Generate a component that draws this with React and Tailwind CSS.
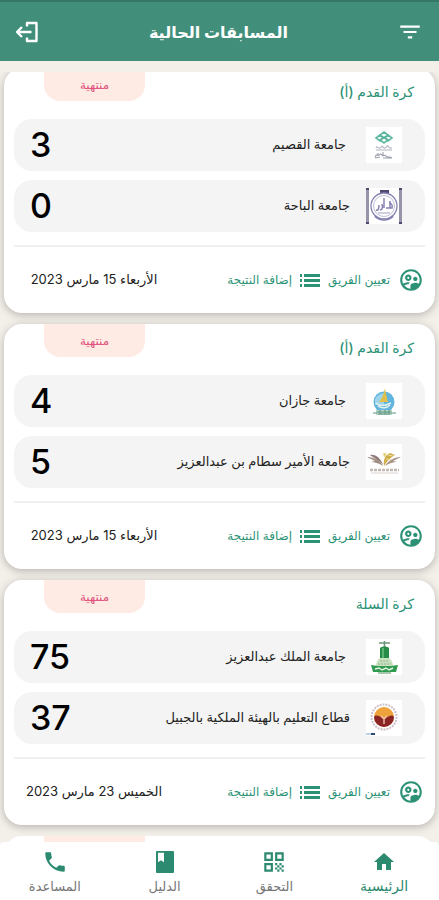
import React, { useState } from 'react'
import { MdFilterList, MdOutlineSupervisedUserCircle, MdHome, MdQrCode, MdPhone } from 'react-icons/md'

const LogoutIcon = () => (
  <svg viewBox="0 0 24 22" className="w-6 h-[22px]" fill="none" stroke="currentColor" strokeWidth="2.4" strokeLinejoin="round">
    <path d="M11 5.500V2H20.500v18H11v-3.500" />
    <path d="M15.500 11H1M6 6L1 11L6 16" />
  </svg>
)

const ListIcon = () => (
  <svg viewBox="0 0 20 13" className="w-5 h-[13px]" fill="currentColor">
    <path d="M0 0h2v3H0zM0 5h2v3H0zM0 10h2v3H0zM4 0h16v3H4zM4 5h16v3H4zM4 10h16v3H4z" />
  </svg>
)

const BookIcon = () => (
  <svg viewBox="0 0 18 22" className="w-[18px] h-[22px]" fill="currentColor">
    <path fillRule="evenodd" d="M1 0h16q1 0 1 1v20q0 1-1 1H1q-1 0-1-1V1q0-1 1-1zM2 1.800v9.400l3-2l3 2V1.800z" />
  </svg>
)

const QassimLogo = () => (
  <svg viewBox="0 0 36 36" className="w-9 h-9 bg-white">
    <g fill="none" stroke="#5cb8a0" strokeWidth="1.6">
      <path d="M18 5l4 3l-4 3l-4-3zM18 10l4 3l-4 3l-4-3z" />
      <path d="M10 11l4-3l3 3l-3 3zM26 11l-4-3l-3 3l3 3z" />
    </g>
    <g fill="none" stroke="#b3b6c0" strokeWidth="1.1">
      <path d="M10 21c1-3 2 1 4 0s2-3 3-1s3 1 4-1s1 3 5 2M10 23h16" />
      <path d="M9 30c2-4 2-1 4-2s1-2 3 0s3-1 4 1s4 0 6 2M12 26v3M17 25v4M9 31l5-1M17 31h9" stroke="#9ca0ad" />
    </g>
  </svg>
)

const BahaLogo = () => (
  <svg viewBox="0 0 36 36" className="w-9 h-9 bg-white">
    <path d="M0 0h3v36H0zM33 0h3v36h-3z" fill="#9694a8" />
    <path d="M0 0h3v2H0zM33 0h3v2h-3zM0 34h3v2H0zM33 34h3v2h-3zM14 2h9v3h-9z" fill="#4c4a73" />
    <g fill="none" stroke="#8682b2">
      <circle cx="18" cy="18" r="13" strokeWidth="1.3" />
      <circle cx="18" cy="18" r="10.5" stroke="#c0bed8" />
      <path d="M10 22c2 1 3-1 3-5M14 22c2 0 3-2 2-6M18 20V10M20 20h6c1-3-1-5-3-5M24 13v7" strokeWidth="1.5" />
      <path d="M12 25h12" stroke="#a3a1c4" />
      <path d="M9 28c5 5 13 5 18 0" strokeWidth="2.2" />
    </g>
  </svg>
)

const JazanLogo = () => (
  <svg viewBox="0 0 36 36" className="w-9 h-9 bg-white">
    <circle cx="18" cy="19" r="10.5" fill="#62b5de" />
    <path d="M9 16c3-5 6-5 9-6v12H9z" fill="#9ed5ec" />
    <path d="M19 5c1 6 2 10 3 14h-9c3-4 5-8 6-14z" fill="#dfc04c" />
    <path d="M10 20c4 4 9 3 15 0M12 23c4 3 9 2 12-1" fill="none" stroke="#e2f2ed" strokeWidth="1.4" />
    <path d="M10 27h16v5H10z" fill="#b8d6c4" />
    <path d="M7 30h4M25 30h5M11 29h14M12 31h12M14 27v4M19 27v4M23 27v4" stroke="#5c9484" fill="none" />
  </svg>
)

const SattamLogo = () => (
  <svg viewBox="0 0 36 36" className="w-9 h-9 bg-white">
    <path d="M1 13c5 0 12 2 16 9c-5-3-8-4-12-4l4-1z" fill="#a18d80" />
    <path d="M4 11c6-1 11 4 13 10c-4-5-8-6-13-10z" fill="#8e7a78" />
    <path d="M35 13c-5 0-12 2-16 9c5-3 8-4 12-4l-4-1z" fill="#aa9688" />
    <path d="M18 22c-1-6 1-11 6-13l5 2c-5 3-8 6-11 11z" fill="#cfae48" />
    <path d="M17 10l3-1l-1 4zM22 11l5 1M20 15l5 1" fill="#dfbf50" stroke="#eadb9f" />
    <path d="M4 26h29" stroke="#c3b8b2" strokeWidth="2.5" strokeDasharray="3 1" />
    <path d="M5 29h27" stroke="#ddd4d0" />
  </svg>
)

const KingAbdulazizLogo = () => (
  <svg viewBox="0 0 36 36" className="w-9 h-9 bg-white">
    <path d="M13 4h11M18.500 2v6" stroke="#71947c" strokeWidth="1.6" />
    <path d="M14 9c2-2 7-2 9 0v12h-9z" fill="#278c48" />
    <path d="M16 9h2v10h-2z" fill="#5cb374" />
    <path d="M10 28c0-5 2-8 4-9h9c3 2 4 5 4 9z" fill="#c9e2bd" />
    <path d="M14 22h9M12 25h13" stroke="#8fae9c" strokeDasharray="2 1" />
    <path d="M5 26l7 1h13l7-1l-2 7H7z" fill="#2f9a50" />
    <path d="M9 30l4-1l3 2l4-2l3 2l4-2" fill="none" stroke="#e6f3e4" strokeWidth="1.4" />
    <path d="M12 34h13" stroke="#87b591" strokeWidth="1.5" />
  </svg>
)

const JubailLogo = () => (
  <svg viewBox="0 0 36 36" className="w-9 h-9 bg-white">
    <circle cx="18" cy="17" r="12.5" fill="none" stroke="#cfc0cb" strokeWidth="2" strokeDasharray="2 1" />
    <circle cx="18" cy="17" r="10" fill="#efa23b" />
    <path d="M8 17c2-3 5-1 7 0l3 2l3-2c3-1 5-3 7 0a10 10 0 0 1-20 0z" fill="#8b2424" />
    <path d="M15 16l3 3l3-3M18 19v5" fill="none" stroke="#eec7ac" strokeWidth="1.4" />
    <path d="M0 34h5" stroke="#9db8cf" strokeWidth="1.3" />
    <path d="M5 34h4" stroke="#2e4a78" strokeWidth="2" />
  </svg>
)

const matches = [
  {
    sport: 'كرة القدم (أ)',
    date: 'الأربعاء 15 مارس 2023',
    teams: [
      { name: 'جامعة القصيم', score: 3, Logo: QassimLogo },
      { name: 'جامعة الباحة', score: 0, Logo: BahaLogo }
    ]
  },
  {
    sport: 'كرة القدم (أ)',
    date: 'الأربعاء 15 مارس 2023',
    teams: [
      { name: 'جامعة جازان', score: 4, Logo: JazanLogo },
      { name: 'جامعة الأمير سطام بن عبدالعزيز', score: 5, Logo: SattamLogo }
    ]
  },
  {
    sport: 'كرة السلة',
    date: 'الخميس 23 مارس 2023',
    teams: [
      { name: 'جامعة الملك عبدالعزيز', score: 75, Logo: KingAbdulazizLogo },
      { name: 'قطاع التعليم بالهيئة الملكية بالجبيل', score: 37, Logo: JubailLogo }
    ]
  }
]

const tabs = [
  { label: 'الرئيسية', icon: <MdHome className="w-6 h-6" /> },
  { label: 'التحقق', icon: <MdQrCode className="w-[26px] h-[26px]" /> },
  { label: 'الدليل', icon: <BookIcon /> },
  { label: 'المساعدة', icon: <MdPhone className="w-[26px] h-[26px]" /> }
]

const Badge = ({ children }) => (
  <span className="flex items-center justify-center w-[101px] h-[33px] ml-[30px] rounded-b-2xl bg-[#feece4] text-xs text-[#e0527c]">
    {children}
  </span>
)

const TeamRow = ({ team, first }) => {
  const { name, score, Logo } = team
  return (
    <li className="flex items-center h-[52px] rounded-[18px] bg-[#f4f4f4] pr-[23px] pl-4">
      <Logo />
      <span className={`text-[13px] font-medium text-[#222] ${first ? 'mr-5' : 'mr-4'}`}>{name}</span>
      <span className="mr-auto text-[34px] leading-none font-medium text-black">{score}</span>
    </li>
  )
}

const MatchCard = ({ match }) => (
  <article className="rounded-[18px] bg-white px-[10px] shadow-[0_2px_8px_rgba(0,0,0,0.25)]">
    <div className="flex items-start justify-between h-[51px] pr-[11px]">
      <h2 className="mt-3 text-sm leading-6 font-medium text-[#2c9276]">{match.sport}</h2>
      <Badge>منتهية</Badge>
    </div>
    <ul className="flex flex-col gap-[9px]">
      {match.teams.map((team, index) => (
        <TeamRow key={team.name} team={team} first={index === 0} />
      ))}
    </ul>
    <div className="flex items-center h-[68px] mt-[13px] border-t-2 border-[#f0f0f0] pr-[1px] text-[#2c9276]">
      <button className="flex items-center gap-2 text-xs">
        <MdOutlineSupervisedUserCircle className="w-[26px] h-[26px]" />
        تعيين الفريق
      </button>
      <button className="flex items-center gap-2 mr-2 text-xs">
        <ListIcon />
        إضافة النتيجة
      </button>
      <time className="w-[160px] mr-auto text-center text-[13px] text-[#222] whitespace-nowrap">{match.date}</time>
    </div>
  </article>
)

const App = () => {
  const [active, setActive] = useState('الرئيسية')

  return (
    <div
      dir="rtl"
      className="flex flex-col h-dvh bg-[#f3efe9] font-['Inter','DejaVu_Sans',sans-serif]"
    >
      <header className="flex items-center justify-between h-[61px] shrink-0 px-4 border-t-2 border-[#357767] bg-[#418f7b] text-white">
        <button aria-label="تصفية">
          <MdFilterList className="w-[26px] h-[26px]" />
        </button>
        <h1 className="text-base font-bold">المسابقات الحالية</h1>
        <button aria-label="خروج">
          <LogoutIcon />
        </button>
      </header>

      <main className="flex-1 min-h-0 mt-[11px] overflow-y-auto [scrollbar-width:none]">
        <div className="flex flex-col gap-[11px] px-1 -mt-1">
          {matches.map((match, index) => (
            <MatchCard key={index} match={match} />
          ))}
          {/* next card peeks out above the tab bar */}
          <article className="flex justify-end h-[245px] rounded-[18px] bg-white px-[10px]">
            <Badge />
          </article>
        </div>
      </main>

      <nav className="grid grid-cols-4 h-[58px] shrink-0 rounded-t bg-white">
        {tabs.map((tab) => (
          <button
            key={tab.label}
            onClick={() => setActive(tab.label)}
            className="flex flex-col items-center pt-2 text-[#2c8a70]"
          >
            <span className="flex items-center h-6">{tab.icon}</span>
            <span
              className={`mt-[2px] leading-5 whitespace-nowrap ${
                active === tab.label ? 'text-sm font-medium' : 'text-[13px] text-[#777]'
              }`}
            >
              {tab.label}
            </span>
          </button>
        ))}
      </nav>
    </div>
  )
}

export default App
